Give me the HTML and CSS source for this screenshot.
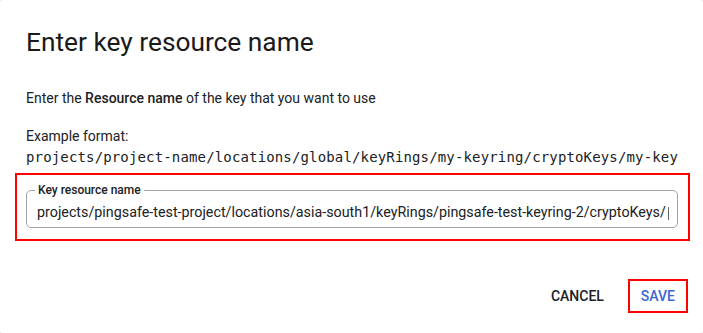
FILE: index.html
```html
<!DOCTYPE html>
<html lang="en">
<head>
    <meta charset="UTF-8">
    <meta name="viewport" content="width=device-width, initial-scale=1.0">
    <title>Enter key resource name</title>
    <link rel="stylesheet" href="styles.css">
</head>
<body>

<div class="dialog">
    <h1 class="dialog-title">Enter key resource name</h1>

    <p class="intro">Enter the <b>Resource name</b> of the key that you want to use</p>

    <div class="format">
        <div>Example format:</div>
        <code>projects/project-name/locations/global/keyRings/my-keyring/cryptoKeys/my-key</code>
    </div>

    <div class="highlight field-box">
        <fieldset class="outlined">
            <legend>Key resource name</legend>
            <div class="field-value">projects/pingsafe-test-project/locations/asia-south1/keyRings/pingsafe-test-keyring-2/cryptoKeys/<span class="caret"></span></div>
        </fieldset>
    </div>

    <div class="actions">
        <button type="button" class="btn">Cancel</button>
        <div class="highlight save-box">
            <button type="button" class="btn btn-primary">Save</button>
        </div>
    </div>
</div>

</body>
</html>
```

FILE: styles.css
```css
html {
    background-color: #e6e6e6;
}
body {
    margin: 0;
    font-family: Roboto, Arial, sans-serif;
    color: #202124;
}
.dialog {
    height: 333px;
    box-sizing: border-box;
    background-color: #fff;
    border-radius: 3px;
    padding: 0 13px 0 15px;
}
.dialog-title {
    margin: 0;
    padding: 24px 0 0 11px;
    font-size: 26.3px;
    line-height: 36px;
    font-weight: 400;
    color: #1a1a1a;
}
.intro {
    margin: 28px 0 0 11px;
    font-size: 14px;
    line-height: 20px;
}
.intro b {
    font-weight: 500;
}
.format {
    margin: 18px 0 0 11px;
    font-size: 14px;
    line-height: 21px;
}
.format code {
    display: block;
    font-family: "DejaVu Sans Mono", "Liberation Mono", monospace;
    font-size: 14px;
    letter-spacing: 0.15px;
}

/* Red annotation frames */
.highlight {
    border: 2px solid #f00;
}
.field-box {
    margin-top: 5px;
    padding: 8px 10px 11px 9px;
}
.outlined {
    margin: 0;
    min-width: 0;
    padding: 0 4px 0 10px;
    height: 45px;
    box-sizing: border-box;
    border: 1px solid #a0a4a8;
    border-radius: 5px;
}
.outlined legend {
    padding: 0 3px;
    margin-left: -2px;
    font-size: 12px;
    font-weight: 500;
    line-height: 14px;
}
.field-value {
    font-size: 14.3px;
    line-height: 20px;
    padding-top: 5px;
    white-space: nowrap;
    overflow: hidden;
}
.caret {
    display: inline-block;
    width: 1px;
    height: 13px;
    margin-left: 2px;
    vertical-align: -3px;
    background-color: #666;
}

.actions {
    display: flex;
    justify-content: flex-end;
    align-items: center;
    gap: 14px;
    margin-top: 38px;
    padding-right: 2px;
}
.btn {
    background: none;
    border: none;
    font-family: Roboto, Arial, sans-serif;
    font-size: 14px;
    font-weight: 500;
    text-transform: uppercase;
    color: #202124;
    padding: 8px 10px;
    cursor: pointer;
}
.save-box {
    display: flex;
}
.btn-primary {
    color: #3a66d6;
    padding: 7px 11px;
}
```
